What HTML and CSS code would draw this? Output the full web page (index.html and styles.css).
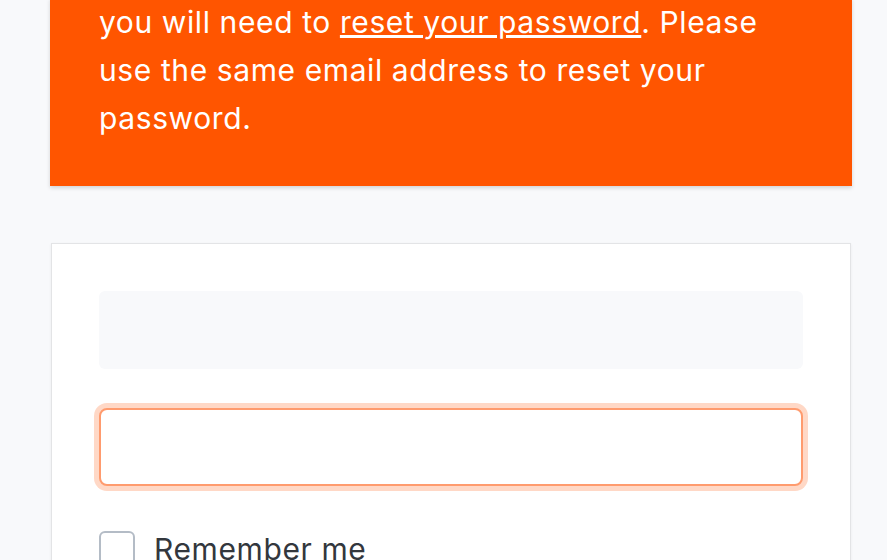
FILE: index.html
```html
<!DOCTYPE html>
<html lang="en">
<head>
    <meta charset="UTF-8">
    <meta name="viewport" content="width=device-width, initial-scale=1.0">
    <title>Sign in</title>
    <link rel="stylesheet" href="styles.css">
</head>
<body>
    <div class="page">
        <!-- Hinweis oben -->
        <div class="notice">
            <p>you will need to <a href="#">reset your password</a>. Please use the same email address to reset your password.</p>
        </div>

        <!-- Login-Karte -->
        <form class="card">
            <div class="field-placeholder"></div>
            <input class="field" type="password">
            <label class="remember">
                <span class="checkbox"></span>
                Remember me
            </label>
        </form>
    </div>
</body>
</html>
```

FILE: styles.css
```css
/* Seite */
body {
    margin: 0;
    background-color: #f8f9fb;
    font-family: 'Inter', 'Liberation Sans', sans-serif;
    letter-spacing: 0.6px;
    overflow: hidden;
}

.page {
    width: 802px;
    margin: -2px 0 0 50px;
}

/* Orange Hinweisbox */
.notice {
    background-color: #ff5500;
    color: white;
    padding: 0 49px 44px;
    box-shadow: 0 2px 4px rgba(0, 0, 0, 0.15);
}

.notice p {
    margin: 0;
    font-size: 30px;
    line-height: 48px;
}

.notice a {
    color: white;
}

/* Karte */
.card {
    display: flex;
    flex-direction: column;
    width: 800px;
    box-sizing: border-box;
    margin: 57px 0 0 1px;
    padding: 47px 47px 60px;
    background-color: white;
    border: 1px solid #e3e4e6;
    box-shadow: 0 1px 3px rgba(0, 0, 0, 0.06);
}

.field-placeholder {
    height: 78px;
    background-color: #f8f9fb;
    border-radius: 6px;
}

.field {
    margin-top: 39px;
    height: 78px;
    box-sizing: border-box;
    border: 2px solid #ff9b6e;
    border-radius: 8px;
    box-shadow: 0 0 0 5px #ffd8c6;
    outline: none;
}

.remember {
    display: flex;
    align-items: center;
    gap: 19px;
    margin-top: 45px;
    font-size: 30px;
    color: #33373d;
}

.checkbox {
    width: 32px;
    height: 32px;
    border: 2px solid #b4bcc6;
    border-radius: 6px;
}
```
